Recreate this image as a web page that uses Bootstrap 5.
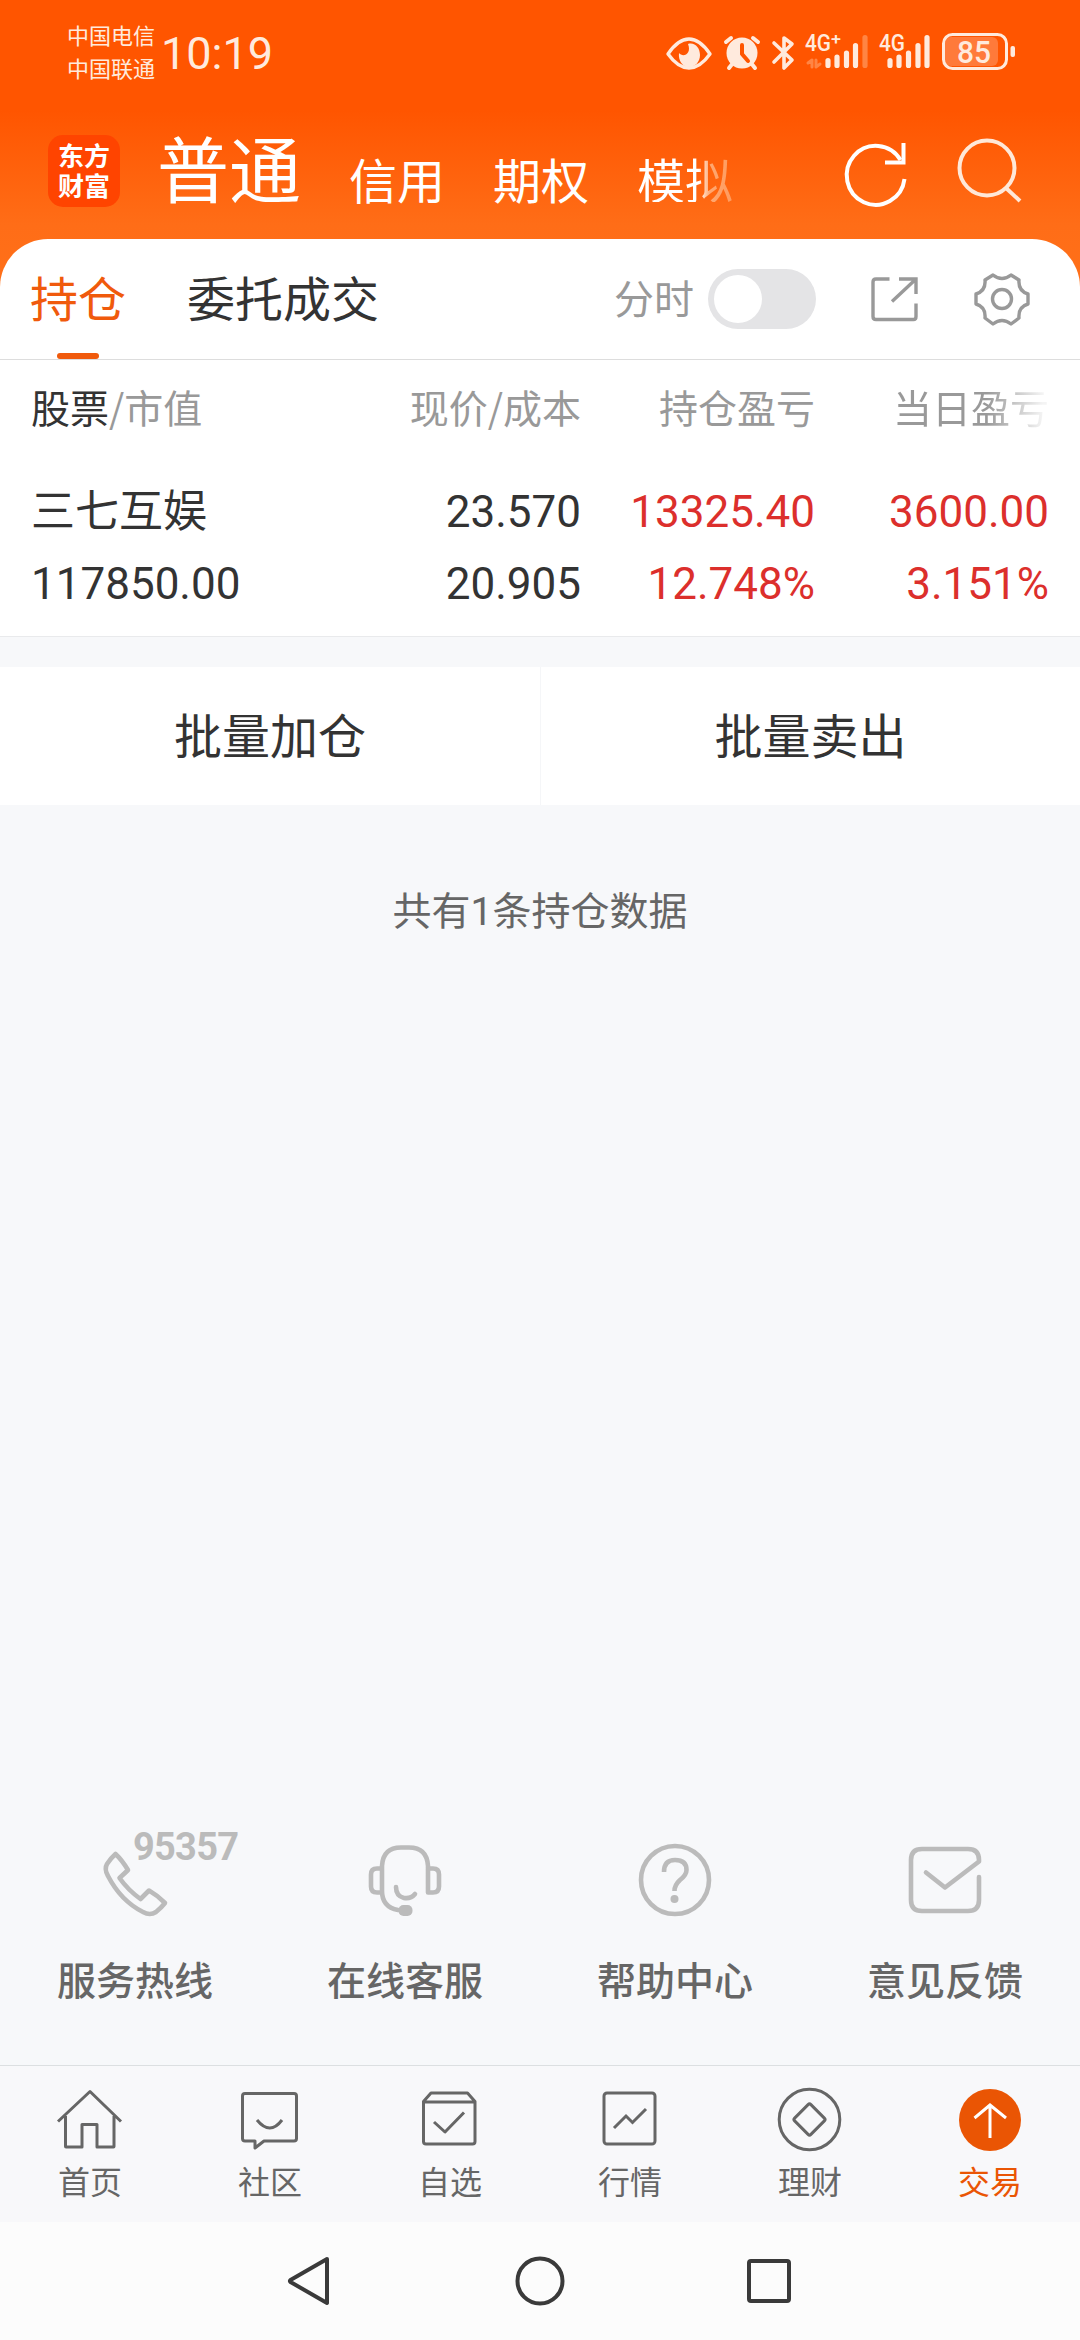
<!DOCTYPE html>
<html lang="zh-CN">
<head>
<meta charset="utf-8">
<meta name="viewport" content="width=device-width, initial-scale=1">
<title>持仓</title>
<link href="https://cdn.jsdelivr.net/npm/bootstrap@5.3.0/dist/css/bootstrap.min.css" rel="stylesheet">
<style>
  body { font-family: "Noto Sans CJK SC", sans-serif; color: #333; background: #f7f8fa; }
  svg { display: block; flex: none; }
  .screen { width: 1080px; height: 2340px; overflow: hidden; }
  .num { font-family: Roboto, sans-serif; line-height: 1; }
  .brandbar { height: 287px; margin-bottom: -48px; background: linear-gradient(#ff5500 0, #ff5500 110px, #ff6d17 225px, #ff7019 287px); color: #fff; }
  .statusbar { height: 106px; padding-left: 67px; color: #ffeadd; }
  .carriers { width: 94px; padding-top: 18px; font-size: 22px; line-height: 33px; }
  .clock { padding-top: 32px; font-size: 45px; line-height: 44px; font-family: Roboto, sans-serif; }
  .sysicons { margin: 24px 60px 0 auto; }
  .logo { width: 72px; height: 72px; margin: 29px 37px 0 48px; border-radius: 15px; background: #ff4400; font-size: 26px; font-weight: 700; line-height: 30px; padding-top: 5px; }
  .acct { font-size: 48px; line-height: 48px; margin-top: 48px; margin-left: 48px; }
  .acct-main { font-size: 72px; line-height: 72px; margin-top: 24px; }
  .fade-acct { background: linear-gradient(90deg, #fff 64%, #ffa871 76%, #ff9a5c 100%); -webkit-background-clip: text; background-clip: text; color: transparent; }
  .headtools { margin: 15px 55px 0 auto; }
  .sheet { border-radius: 48px 48px 0 0; height: 398px; border-bottom: 1px solid #e9eaec; }
  .tabbar { height: 121px; padding: 0 48px 0 30px; border-bottom: 1px solid #ddd; font-size: 48px; }
  .tabitem { height: 120px; line-height: 114px; }
  .tabitem.on { color: #f05a0c; position: relative; margin-right: 61px; }
  .tabitem.on::after { content: ""; position: absolute; left: 27px; bottom: 0; width: 42px; height: 6px; border-radius: 3px; background: #f05a0c; }
  .chart-label { font-size: 40px; height: 120px; line-height: 116px; color: #999; }
  .toggle { width: 108px; height: 60px; border-radius: 30px; background: #e4e4e6; padding: 6px; margin: 0 51px 0 14px; }
  .toggle span { display: block; width: 48px; height: 48px; border-radius: 50%; background: #fff; }
  .holdings { padding: 0 31px; }
  .heads { height: 92px; line-height: 92px; font-size: 39px; color: #999; }
  .heads .cell:last-child span { background: linear-gradient(90deg, #999 60%, #f4f4f4 96%); -webkit-background-clip: text; background-clip: text; color: transparent; }
  .ink { color: #333; }
  .stockrow { margin-top: 20px; font-size: 44px; line-height: 72px; }
  .cell { width: 234px; text-align: right; white-space: nowrap; }
  .cell:first-child { width: 316px; text-align: left; }
  .up { color: #dc2f2c; }
  .batch { height: 138px; margin-top: 30px; font-size: 48px; line-height: 133px; }
  .batch .half + .half { border-left: 1px solid #f5f6f8; }
  .total { margin-top: 77px; height: 52px; font-size: 39px; line-height: 52px; color: #666; }
  .services { color: #666; font-size: 39px; font-weight: 500; line-height: 50px; padding-bottom: 62px; }
  .services svg { margin-bottom: 30px; }
  .appnav { height: 157px; border-top: 1px solid #dcdfe1; background: #f8f8fa; color: #666; font-size: 32px; line-height: 40px; padding-top: 18px; }
  .appnav svg { margin-bottom: 6px; }
  .appnav .on { color: #ea5504; }
  .keys { height: 118px; background: #fcfcfc; }
</style>
</head>
<body>
<div class="screen d-flex flex-column">
  <header class="brandbar flex-shrink-0">
    <div class="statusbar d-flex align-items-start">
      <div class="carriers"><div>中国电信</div><div>中国联通</div></div>
      <div class="clock">10:19</div>
      <svg class="sysicons" width="360" height="56" viewBox="660 24 360 56" fill="none" stroke="#ffeadd" stroke-linecap="round" stroke-linejoin="round">
        <path d="M668 54Q678 39 689 39T710 54Q700 68 689 68T668 54Z" stroke-width="3.4"/>
        <path d="M688 44C695 42 700 48 700 55C700 62 695 67 689 67C683 67 678 61 679 53C683 58 692 54 688 44Z" fill="#ffeadd" stroke="none"/>
        <circle cx="742" cy="53" r="15.500" fill="#ffeadd" stroke="none"/>
        <path d="M726 42l5-4M753 38l5 4M733 63l-4 5M751 63l4 5" stroke-width="4"/>
        <path d="M742 45v9l6 7" stroke="#ff5500" stroke-width="4"/>
        <path d="M774 43l18 17-8 8V38l8 6-18 18" stroke-width="3.600"/>
        <g fill="#ffeadd" stroke="none" font-family="Roboto, sans-serif" font-weight="500">
          <text x="805" y="51" font-size="23" textLength="26" lengthAdjust="spacingAndGlyphs">4G</text>
          <text x="831" y="45" font-size="17" textLength="10" lengthAdjust="spacingAndGlyphs">+</text>
          <text x="879" y="51" font-size="23" textLength="26" lengthAdjust="spacingAndGlyphs">4G</text>
        </g>
        <path d="M828 60.500v5M837 57v8.500M846.500 53v12.500M855.500 45.500v20M890 60.500v5M899 57v8.500M908.500 53v12.500M918 45.500v20M927 37.500v28" stroke-width="5.200"/>
        <path d="M865 37.500v28" stroke="#ff8544" stroke-width="5.200"/>
        <path d="M808 63l4-3v7M816 60v7l4-3" stroke="#ff8544" stroke-width="3"/>
        <rect x="945" y="37" width="53" height="29" rx="6" fill="#ff7a3a" stroke="none"/>
        <rect x="943.500" y="34.500" width="63" height="34" rx="9" stroke-width="3"/>
        <rect x="1010.500" y="46" width="4.500" height="11" rx="2" fill="#ffeadd" stroke="none"/>
        <text x="957" y="63" font-size="32" font-weight="500" fill="#ffeadd" stroke="none" font-family="Roboto, sans-serif" textLength="34" lengthAdjust="spacingAndGlyphs">85</text>
      </svg>
    </div>
    <div class="d-flex align-items-start">
      <div class="logo text-center"><div>东方</div><div>财富</div></div>
      <div class="acct-main">普通</div>
      <div class="acct">信用</div>
      <div class="acct">期权</div>
      <div class="acct fade-acct">模拟</div>
      <svg class="headtools" width="190" height="90" viewBox="835 121 190 90" fill="none" stroke="#fff" stroke-width="4">
        <path d="M904.500 179A29 29.500 0 1 1 900.500 160"/>
        <path d="M903.500 143v19.500H885"/>
        <g stroke="#ffe8d8"><circle cx="987" cy="168" r="27.500"/><path d="M1006 188l14 13"/></g>
      </svg>
    </div>
  </header>

  <section class="sheet bg-white flex-shrink-0">
    <div class="tabbar d-flex align-items-center">
      <div class="tabitem on">持仓</div>
      <div class="tabitem">委托成交</div>
      <div class="chart-label ms-auto">分时</div>
      <div class="toggle"><span></span></div>
      <svg width="165" height="64" viewBox="867 267 165 64" fill="none" stroke="#999" stroke-width="3.400">
        <path d="M889.500 279H876q-3 0-3 3v34.500q0 3 3 3h37.500q2.500 0 2.500-3V303.500M916 294V279H899M916 279l-24 22.500"/>
        <path d="M993 275Q1002 282 1011 275L1019 280Q1018 291 1028 294V304Q1018 307 1019 318L1011 324Q1002 317 993 324L985 318Q986 307 976 304V294Q986 291 985 280Z" stroke-linejoin="round"/>
        <circle cx="1002" cy="299" r="9.500"/>
      </svg>
    </div>
    <div class="holdings">
      <div class="heads d-flex">
        <div class="cell"><span class="ink">股票</span>/市值</div>
        <div class="cell">现价/成本</div>
        <div class="cell">持仓盈亏</div>
        <div class="cell"><span>当日盈亏</span></div>
      </div>
      <div class="stockrow d-flex">
        <div class="cell"><div>三七互娱</div><div><span class="num">117850.00</span></div></div>
        <div class="cell"><div><span class="num">23.570</span></div><div><span class="num">20.905</span></div></div>
        <div class="cell up"><div><span class="num">13325.40</span></div><div><span class="num">12.748%</span></div></div>
        <div class="cell up"><div><span class="num">3600.00</span></div><div><span class="num">3.151%</span></div></div>
      </div>
    </div>
  </section>

  <div class="batch row g-0 bg-white text-center flex-shrink-0">
    <div class="half col-6">批量加仓</div>
    <div class="half col-6">批量卖出</div>
  </div>
  <div class="total text-center">共有<span class="num">1</span>条持仓数据</div>

  <div class="services row g-0 text-center mt-auto">
    <div class="col-3">
      <svg width="270" height="100" viewBox="0 1824 270 100" fill="none" stroke="#bbb" stroke-width="4.600" stroke-linejoin="round">
        <path d="M115.500 1855Q122 1861 128 1871Q125 1874 119.500 1879Q128 1891 140.500 1900L149 1891.500Q157 1896 165 1904Q161 1909 156 1913Q150 1917 143 1913Q121 1902 108 1877Q104 1870 107 1865Q111 1859 115.500 1855Z"/>
        <text x="133" y="1861" fill="#bbb" stroke="none" font-family="Roboto, sans-serif" font-weight="700" font-size="38" textLength="106" lengthAdjust="spacing">95357</text>
      </svg>
      服务热线
    </div>
    <div class="col-3">
      <svg width="270" height="100" viewBox="270 1824 270 100" fill="none" stroke="#bbb" stroke-width="4.600" stroke-linecap="round" stroke-linejoin="round">
        <path d="M382 1869.500h-5q-6 0-6 6v12q0 6 6 6h5M398 1911Q382 1908 382 1892V1867Q383 1848 402 1848.500H408Q427 1848 428 1867V1893.500h5q6 0 6-6v-12q0-6-6-6h-5M396 1888Q396 1897 404 1899Q411 1900 415 1895"/>
        <rect x="398.500" y="1906" width="14" height="11" rx="5" fill="#bbb" stroke="none"/>
      </svg>
      在线客服
    </div>
    <div class="col-3">
      <svg width="270" height="100" viewBox="540 1824 270 100" fill="none" stroke="#bbb" stroke-width="4.600">
        <circle cx="675" cy="1881" r="34"/>
        <path d="M664 1873Q664 1861 675 1861Q686.500 1861 686.500 1871Q686.500 1876 680 1881Q674.500 1886 674.500 1892"/>
        <circle cx="674.500" cy="1900" r="4" fill="#bbb" stroke="none"/>
      </svg>
      帮助中心
    </div>
    <div class="col-3">
      <svg width="270" height="100" viewBox="810 1824 270 100" fill="none" stroke="#bbb" stroke-width="4.600" stroke-linecap="round" stroke-linejoin="round">
        <path d="M926 1873.500l19 15 34-26V1861q0-11-11-11H922q-11 0-11 11v40q0 11 11 11h46q11 0 11-11V1878"/>
      </svg>
      意见反馈
    </div>
  </div>

  <nav class="appnav d-flex text-center flex-shrink-0">
    <div class="col-2">
      <svg width="180" height="70" viewBox="0 2084 180 70" fill="none" stroke="#666" stroke-width="3">
        <path d="M58 2121.500L90 2091.500l31 30M65.500 2116v30.500q0 .5.500.500H82V2124.500H97V2147h16.500q.5 0 .5-.5V2116" stroke-linejoin="round"/>
      </svg>首页
    </div>
    <div class="col-2">
      <svg width="180" height="70" viewBox="180 2084 180 70" fill="none" stroke="#666" stroke-width="3" stroke-linejoin="round">
        <path d="M245 2093.500h49q2.500 0 2.500 2.500v42.500q0 2.500-2.500 2.500H264l-9 7v-7h-10q-2.500 0-2.500-2.500V2096q0-2.500 2.500-2.500ZM257 2120Q270 2136 282 2120"/>
      </svg>社区
    </div>
    <div class="col-2">
      <svg width="180" height="70" viewBox="360 2084 180 70" fill="none" stroke="#666" stroke-width="3" stroke-linejoin="round">
        <path d="M423.500 2101.500l7.500-8.500h36.500l7.500 8.500V2141.500q0 2.500-2.500 2.500H426q-2.500 0-2.500-2.500ZM423.500 2102h51.500M434 2122l11 10 19-19.500"/>
      </svg>自选
    </div>
    <div class="col-2">
      <svg width="180" height="70" viewBox="540 2084 180 70" fill="none" stroke="#666" stroke-width="3">
        <rect x="604" y="2093" width="51" height="51" rx="3"/><path d="M614 2128l12-12 6.500 6.500 13.500-13.500"/>
      </svg>行情
    </div>
    <div class="col-2">
      <svg width="180" height="70" viewBox="720 2084 180 70" fill="none" stroke="#666" stroke-width="3" stroke-linejoin="round">
        <circle cx="809.500" cy="2119.500" r="30.300"/><rect x="798" y="2108" width="23" height="23" rx="2" transform="rotate(45 809.500 2119.500)"/>
      </svg>理财
    </div>
    <div class="col-2 on">
      <svg width="180" height="70" viewBox="900 2084 180 70" fill="none" stroke="#fff" stroke-width="3">
        <circle cx="990" cy="2120" r="31" fill="#ea5504" stroke="none"/><path d="M990 2138v-33M974.500 2118L990 2105l16 13"/>
      </svg>交易
    </div>
  </nav>
  <div class="keys d-flex justify-content-center align-items-center flex-shrink-0">
    <svg width="520" height="60" viewBox="280 2251 520 60" fill="none" stroke="#3a3a3a" stroke-width="4" stroke-linejoin="round">
      <path d="M327 2259L290.500 2280q-1 1 0 2L327 2303Z"/>
      <circle cx="540" cy="2281" r="22.500"/>
      <rect x="749" y="2261" width="40" height="40" rx="2"/>
    </svg>
  </div>
</div>
<script src="https://cdn.jsdelivr.net/npm/bootstrap@5.3.0/dist/js/bootstrap.bundle.min.js"></script>
</body>
</html>
